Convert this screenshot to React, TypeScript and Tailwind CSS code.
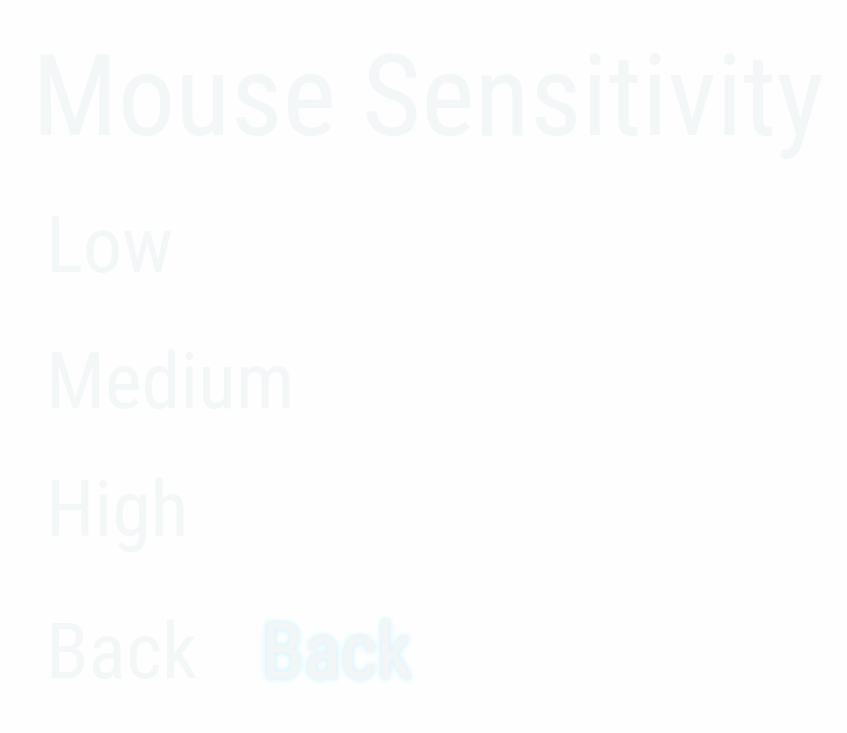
const itemStyle = "cursor-pointer text-left text-[78px] leading-20";

export default function App() {
  return (
    <main className="min-h-screen bg-[#fefefe] px-8 pt-9 pb-8 font-['Roboto_Condensed','Roboto',sans-serif] font-normal text-[#f3f7f7]">
      <h1 className="text-[114px] leading-[120px] whitespace-nowrap">Mouse Sensitivity</h1>
      <nav aria-label="Mouse Sensitivity" className="mt-[50px] flex flex-col items-start pl-3.5">
        <button type="button" className={itemStyle}>Low</button>
        <button type="button" className={`mt-14 ${itemStyle}`}>Medium</button>
        <button type="button" className={`mt-12 ${itemStyle}`}>High</button>
        <div className="mt-[62px] flex gap-16">
          <button type="button" className={itemStyle}>Back</button>
          <button
            type="button"
            className={`text-[#f3f6f7] [-webkit-text-stroke:1px_#f3f6f7] [text-shadow:0_0_4px_#d6f5ff,0_0_6px_#d9f6ff,0_0_8px_#e4f9ff] ${itemStyle}`}
          >
            Back
          </button>
        </div>
      </nav>
    </main>
  );
}
